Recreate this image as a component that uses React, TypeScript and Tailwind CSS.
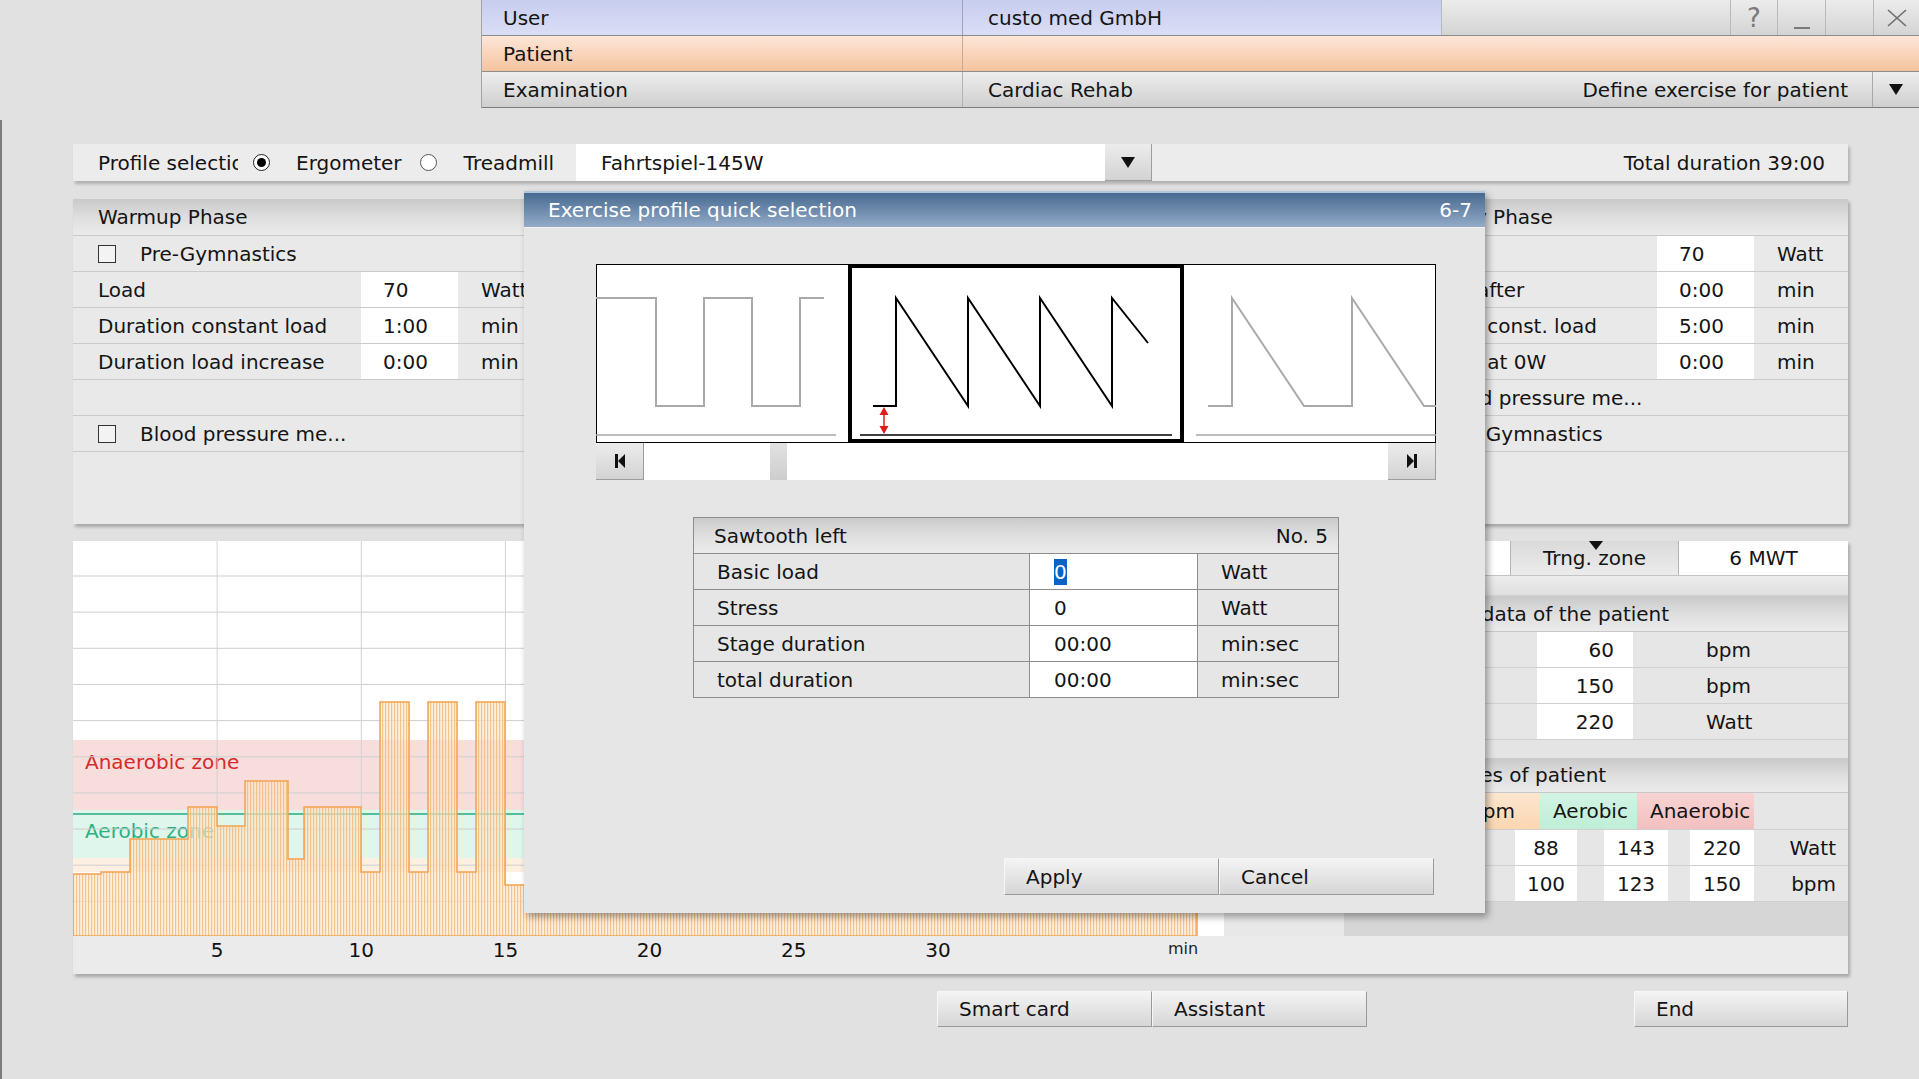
import React from 'react';

const btn =
  'flex items-center border border-t-[#f7f7f7] border-l-[#f7f7f7] border-r-[#9a9a9a] border-b-[#9a9a9a] bg-linear-to-b from-[#f4f4f4] to-[#d6d6d6] pl-[21px]';

const sectionHead =
  'flex items-center border-b border-[#c8c8c8] bg-linear-to-b from-[#c9c9c9] via-[#dedede] to-[#ebebeb]';

function DownArrow() {
  return (
    <svg width="14" height="11" viewBox="0 0 14 11">
      <polygon points="0,0 14,0 7,11" fill="#111" />
    </svg>
  );
}

function Checkbox() {
  return <span className="inline-block h-[18px] w-[18px] shrink-0 border border-[#333] bg-[#f3f3f3]" />;
}

function PhaseRow({ label, value, unit }: { label: string; value: string; unit: string }) {
  return (
    <div className="flex h-[36px] border-b border-[#cacaca]">
      <div className="flex w-[288px] items-center overflow-hidden whitespace-nowrap pl-[25px]">{label}</div>
      <div className="flex w-[97px] items-center bg-white pl-[22px]">{value}</div>
      <div className="flex flex-1 items-center pl-[23px]">{unit}</div>
    </div>
  );
}

function CheckRow({ label }: { label: string }) {
  return (
    <div className="flex h-[36px] items-center border-b border-[#cacaca] pl-[25px]">
      <Checkbox />
      <span className="ml-[24px] whitespace-nowrap">{label}</span>
    </div>
  );
}

function EmptyRow() {
  return <div className="h-[36px] border-b border-[#cacaca]" />;
}

function Panel({ children }: { children: React.ReactNode }) {
  return (
    <div className="flex h-[325px] flex-col bg-[#e9e9e9] shadow-[2px_3px_3px_rgba(0,0,0,0.25)]">{children}</div>
  );
}

// load profile of the exercise, x in px (28.83px per minute), y from chart top
const steps: [number, number][] = [
  [0, 333], [28, 331], [57, 298], [115, 266], [144, 285], [172, 240], [215, 318], [231, 266],
  [288, 331], [307, 161], [336, 331], [355, 161], [384, 331], [403, 161], [432, 344],
  [490, 300], [620, 250], [760, 300], [900, 330], [1040, 344],
];

function LoadChart() {
  const end = 1124;
  let d = `M0,395`;
  steps.forEach(([x, y], i) => {
    const next = i + 1 < steps.length ? steps[i + 1][0] : end;
    d += ` L${x},${y} L${next},${y}`;
  });
  d += ` L${end},395 Z`;
  const hLines = Array.from({ length: 10 }, (_, k) => 35 + k * 36.15);
  const vLines = Array.from({ length: 7 }, (_, k) => (k + 1) * 144.15);
  return (
    <svg width="1151" height="395" className="block shrink-0">
      <defs>
        <pattern id="hatch" width="3" height="10" patternUnits="userSpaceOnUse">
          <rect width="3" height="10" fill="#fbe7cf" fillOpacity="0.65" />
          <rect width="1.2" height="10" fill="#f3bd7c" fillOpacity="0.85" />
        </pattern>
      </defs>
      <rect width="1151" height="395" fill="#fff" />
      <rect x="0" y="199" width="1151" height="70" fill="#f8dddd" />
      <rect x="0" y="269" width="1151" height="48" fill="#def6ec" />
      <rect x="0" y="317" width="1151" height="14" fill="#fdefe2" />
      <line x1="0" y1="273" x2="1151" y2="273" stroke="#2aa882" strokeWidth="1.5" />
      <text x="12" y="228" fontSize="20" fill="#d62a2a">Anaerobic zone</text>
      <text x="12" y="297" fontSize="20" fill="#2bb07f">Aerobic zone</text>
      {hLines.map((y) => (
        <line key={y} x1="0" y1={y} x2="1151" y2={y} stroke="#cfcfcf" strokeWidth="1" />
      ))}
      {vLines.map((x) => (
        <line key={x} x1={x} y1="0" x2={x} y2="395" stroke="#d2d2d2" strokeWidth="1" />
      ))}
      <path d={d} fill="url(#hatch)" stroke="#f2a24e" strokeWidth="1.5" />
    </svg>
  );
}

function AxisRow() {
  const labels = [5, 10, 15, 20, 25, 30];
  return (
    <svg width="1151" height="38" className="block">
      {labels.map((n, i) => (
        <text key={n} x={(i + 1) * 144.15} y="21" fontSize="20" textAnchor="middle" fill="#111">
          {n}
        </text>
      ))}
      <text x="1110" y="18" fontSize="16" textAnchor="middle" fill="#222">
        min
      </text>
    </svg>
  );
}

function ProfileCarousel() {
  return (
    <svg width="840" height="179" className="block">
      <rect x="0.5" y="0.5" width="839" height="178" fill="#fff" stroke="#000" />
      <polyline
        points="0,34 60,34 60,142 108,142 108,34 156,34 156,142 204,142 204,34 228,34"
        fill="none"
        stroke="#a9a9a9"
        strokeWidth="2"
      />
      <line x1="0" y1="171" x2="240" y2="171" stroke="#a9a9a9" strokeWidth="1.5" />
      <polyline
        points="277,142 300,142 300,34 372,142 372,34 444,142 444,34 516,142 516,34 552,79"
        fill="none"
        stroke="#000"
        strokeWidth="2"
      />
      <line x1="264" y1="171" x2="576" y2="171" stroke="#000" strokeWidth="1.5" />
      <line x1="288" y1="148" x2="288" y2="165" stroke="#e01b1b" strokeWidth="1.5" />
      <polygon points="283.5,151 292.5,151 288,143" fill="#e01b1b" />
      <polygon points="283.5,162 292.5,162 288,170" fill="#e01b1b" />
      <rect x="254" y="2" width="332" height="175" fill="none" stroke="#000" strokeWidth="4" />
      <polyline
        points="612,142 636,142 636,34 708,142 756,142 756,34 828,142 840,142"
        fill="none"
        stroke="#a9a9a9"
        strokeWidth="2"
      />
      <line x1="600" y1="171" x2="840" y2="171" stroke="#a9a9a9" strokeWidth="1.5" />
    </svg>
  );
}

function ScrollBar() {
  const cap = 'flex w-[48px] items-center justify-center border-r border-b border-[#9d9d9d] bg-linear-to-b from-[#ececec] to-[#d3d3d3]';
  return (
    <div className="flex h-[37px] w-[840px] bg-white">
      <div className={cap}>
        <svg width="10" height="14" viewBox="0 0 10 14">
          <rect x="0" y="0" width="3" height="14" fill="#111" />
          <polygon points="10,0 10,14 3,7" fill="#111" />
        </svg>
      </div>
      <div className="relative flex-1">
        <div className="absolute left-[126px] top-0 h-full w-[17px] bg-linear-to-b from-[#e2e2e2] to-[#cdcdcd]" />
      </div>
      <div className={cap}>
        <svg width="10" height="14" viewBox="0 0 10 14">
          <polygon points="0,0 0,14 7,7" fill="#111" />
          <rect x="7" y="0" width="3" height="14" fill="#111" />
        </svg>
      </div>
    </div>
  );
}

function ParamRow({ label, value, unit, selected }: { label: string; value: string; unit: string; selected?: boolean }) {
  return (
    <div className="flex h-[36px] border-t border-[#8d8d8d]">
      <div className="flex w-[335px] items-center pl-[23px]">{label}</div>
      <div className="flex w-[168px] items-center border-l border-[#8d8d8d] bg-white pl-[24px]">
        {selected ? <span className="bg-[#0b62c6] leading-[26px] text-white">{value}</span> : value}
      </div>
      <div className="flex flex-1 items-center border-l border-[#8d8d8d] pl-[23px]">{unit}</div>
    </div>
  );
}

function Dialog() {
  return (
    <div className="absolute left-[524px] top-[191px] flex h-[722px] w-[961px] flex-col bg-[#e6e6e6] shadow-[3px_4px_7px_rgba(0,0,0,0.35)]">
      <div className="flex h-[37px] items-center justify-between border-t-2 border-b border-t-[#b3c5d9] border-b-[#f2f2f2] bg-linear-to-b from-[#486a90] to-[#93abc8] pl-[24px] pr-[13px] text-white">
        <span>Exercise profile quick selection</span>
        <span>6-7</span>
      </div>
      <div className="flex flex-col pl-[72px] pt-[36px]">
        <ProfileCarousel />
        <ScrollBar />
        <div className="ml-[97px] mt-[37px] w-[646px] border border-[#8d8d8d]">
          <div className="flex h-[35px] items-center justify-between bg-linear-to-b from-[#cbcbcb] via-[#dfdfdf] to-[#ebebeb] pl-[20px] pr-[10px]">
            <span>Sawtooth left</span>
            <span>No. 5</span>
          </div>
          <ParamRow label="Basic load" value="0" unit="Watt" selected />
          <ParamRow label="Stress" value="0" unit="Watt" />
          <ParamRow label="Stage duration" value="00:00" unit="min:sec" />
          <ParamRow label="total duration" value="00:00" unit="min:sec" />
        </div>
        <div className="ml-[408px] mt-[160px] flex h-[37px]">
          <div className={`${btn} w-[215px]`}>Apply</div>
          <div className={`${btn} w-[215px]`}>Cancel</div>
        </div>
      </div>
    </div>
  );
}

function TrainingZone() {
  const white = 'flex items-center justify-center bg-white';
  return (
    <div className="flex w-[504px] flex-col bg-[#e6e6e6]">
      <div className="flex h-[35px] border-b border-[#c4c4c4]">
        <div className="w-[166px] bg-white" />
        <div className="relative flex w-[169px] items-center justify-center border-x border-[#b4b4b4] bg-linear-to-b from-[#dadada] to-[#ececec]">
          <svg width="14" height="9" viewBox="0 0 14 9" className="absolute left-[78px] top-0">
            <polygon points="0,0 14,0 7,9" fill="#111" />
          </svg>
          Trng. zone
        </div>
        <div className="flex flex-1 items-center justify-center bg-white">6 MWT</div>
      </div>
      <div className="h-[20px] border-b border-[#d2d2d2] bg-linear-to-b from-[#ededed] to-[#dfdfdf]" />
      <div className={`${sectionHead} h-[36px] pl-[50px]`}>Physical data of the patient</div>
      {[
        ['Rest HR', '60', 'bpm'],
        ['Max. HR', '150', 'bpm'],
        ['Load', '220', 'Watt'],
      ].map(([l, v, u]) => (
        <div key={l} className="flex h-[36px] border-b border-[#d0d0d0]">
          <div className="flex w-[193px] items-center pl-[50px]">{l}</div>
          <div className="flex w-[96px] items-center justify-end bg-white pr-[19px]">{v}</div>
          <div className="flex flex-1 items-center pl-[73px]">{u}</div>
        </div>
      ))}
      <div className="h-[18px] bg-[#e4e4e4]" />
      <div className={`${sectionHead} h-[35px] pl-[38px]`}>Limit values of patient</div>
      <div className="flex h-[37px] border-b border-[#d0d0d0]">
        <div className="w-[106px]" />
        <div className="flex w-[90px] items-center justify-end bg-linear-to-b from-[#fde6cf] to-[#fbd6b3] pr-[25px]">bpm</div>
        <div className="flex w-[97px] items-center bg-linear-to-b from-[#d3f3e4] to-[#bfeed8] pl-[13px]">Aerobic</div>
        <div className="flex w-[117px] items-center bg-linear-to-b from-[#f8d3d3] to-[#f2c0c0] pl-[13px]">Anaerobic</div>
      </div>
      {[
        ['Load', '88', '143', '220', 'Watt'],
        ['HR', '100', '123', '150', 'bpm'],
      ].map(([l, a, b, c, u]) => (
        <div key={l} className="flex h-[36px] border-b border-[#d0d0d0]">
          <div className="flex w-[171px] items-center pl-[50px]">{l}</div>
          <div className={`${white} w-[62px]`}>{a}</div>
          <div className="w-[27px]" />
          <div className={`${white} w-[64px]`}>{b}</div>
          <div className="w-[22px]" />
          <div className={`${white} w-[64px]`}>{c}</div>
          <div className="flex flex-1 items-center justify-end pr-[12px]">{u}</div>
        </div>
      ))}
      <div className="flex-1 bg-[#d6d6d6]" />
    </div>
  );
}

export default function App() {
  return (
    <div className="relative h-[1079px] w-[1919px] overflow-hidden bg-[#e1e1e1] font-['DejaVu_Sans',sans-serif] text-[20px] leading-none text-[#141414]">
      {/* header */}
      <div className="flex h-[108px]">
        <div className="w-[481px]" />
        <div className="flex flex-1 flex-col border-l border-[#a3a3a3]">
          <div className="flex h-[36px] border-b border-[#8c8c8c]">
            <div className="flex w-[480px] items-center bg-linear-to-b from-[#c7cdef] to-[#dadef5] pl-[21px]">User</div>
            <div className="flex w-[479px] items-center border-l border-[#9ea3bf] bg-linear-to-b from-[#c7cdef] to-[#dadef5] pl-[25px]">
              custo med GmbH
            </div>
            <div className="w-[289px] border-l border-[#b9b9b9] bg-linear-to-b from-[#ececec] to-[#d4d4d4]" />
            <div className="flex w-[47px] items-center justify-center border-l border-[#b9b9b9] bg-linear-to-b from-[#ececec] to-[#d4d4d4] text-[26px] text-[#7a7a7a]">
              ?
            </div>
            <div className="flex w-[48px] items-end justify-center border-l border-[#b9b9b9] bg-linear-to-b from-[#ececec] to-[#d4d4d4] pb-[6px]">
              <span className="h-[2px] w-[16px] bg-[#7a7a7a]" />
            </div>
            <div className="w-[48px] border-l border-[#b9b9b9] bg-linear-to-b from-[#ececec] to-[#d4d4d4]" />
            <div className="flex flex-1 items-center justify-center border-l border-[#b9b9b9] bg-linear-to-b from-[#ececec] to-[#d4d4d4]">
              <svg width="20" height="18" viewBox="0 0 20 18">
                <path d="M1 1 L19 17 M19 1 L1 17" stroke="#6e6e6e" strokeWidth="1.6" fill="none" />
              </svg>
            </div>
          </div>
          <div className="flex h-[36px] border-b border-[#8c8c8c] bg-linear-to-b from-[#fde6d8] to-[#f5c39f]">
            <div className="flex w-[480px] items-center pl-[21px]">Patient</div>
            <div className="flex-1 border-l border-[#c9a890]" />
          </div>
          <div className="flex h-[36px] border-b border-[#7d7d7d] bg-linear-to-b from-[#eeeeee] to-[#cfcfcf]">
            <div className="flex w-[480px] items-center pl-[21px]">Examination</div>
            <div className="flex flex-1 items-center justify-between border-l border-[#b3b3b3] pl-[25px] pr-[24px]">
              <span>Cardiac Rehab</span>
              <span>Define exercise for patient</span>
            </div>
            <div className="flex w-[47px] items-center justify-center border-l border-[#a8a8a8]">
              <DownArrow />
            </div>
          </div>
        </div>
      </div>

      {/* main */}
      <div className="mt-[12px] h-[959px] border-l-2 border-[#7e7e7e] pl-[71px] pt-[24px]">
        <div className="w-[1775px]">
          {/* profile selection bar */}
          <div className="flex h-[37px] items-center bg-[#ececec] shadow-[2px_3px_3px_rgba(0,0,0,0.22)]">
            <span className="ml-[25px] w-[140px] overflow-hidden whitespace-nowrap">Profile selection</span>
            <span className="ml-[15px] flex h-[17px] w-[17px] items-center justify-center rounded-full border-[1.5px] border-[#222] bg-white">
              <span className="h-[9px] w-[9px] rounded-full bg-black" />
            </span>
            <span className="ml-[26px]">Ergometer</span>
            <span className="ml-[18px] h-[17px] w-[17px] rounded-full border border-[#555] bg-white" />
            <span className="ml-[27px]">Treadmill</span>
            <div className="ml-[22px] flex h-full w-[529px] items-center bg-white pl-[25px]">Fahrtspiel-145W</div>
            <div className="flex h-full w-[47px] items-center justify-center border-r border-b border-[#9d9d9d] bg-linear-to-b from-[#ececec] to-[#d3d3d3]">
              <DownArrow />
            </div>
            <span className="ml-auto pr-[23px]">Total duration 39:00</span>
          </div>

          {/* phase panels */}
          <div className="mt-[18px] flex">
            <div className="w-[479px]">
              <Panel>
                <div className={`${sectionHead} h-[37px] pl-[25px]`}>Warmup Phase</div>
                <CheckRow label="Pre-Gymnastics" />
                <PhaseRow label="Load" value="70" unit="Watt" />
                <PhaseRow label="Duration constant load" value="1:00" unit="min" />
                <PhaseRow label="Duration load increase" value="0:00" unit="min" />
                <EmptyRow />
                <CheckRow label="Blood pressure me..." />
              </Panel>
            </div>
            <div className="mx-[8px] flex-1">
              <Panel>
                <div className={`${sectionHead} h-[37px] pl-[25px]`}>Training Phase</div>
              </Panel>
            </div>
            <div className="w-[479px]">
              <Panel>
                <div className={`${sectionHead} h-[37px] pl-[25px]`}>Recovery Phase</div>
                <PhaseRow label="Load" value="70" unit="Watt" />
                <PhaseRow label="Interval after" value="0:00" unit="min" />
                <PhaseRow label="Duration const. load" value="5:00" unit="min" />
                <PhaseRow label="Duration at 0W" value="0:00" unit="min" />
                <CheckRow label="Blood pressure me..." />
                <CheckRow label="Post-Gymnastics" />
              </Panel>
            </div>
          </div>

          {/* chart panel */}
          <div className="mt-[17px] flex h-[433px] flex-col bg-[#ebebeb] shadow-[2px_3px_3px_rgba(0,0,0,0.25)]">
            <div className="flex h-[395px]">
              <LoadChart />
              <div className="w-[120px] bg-[#e8e8e8]" />
              <TrainingZone />
            </div>
            <div className="h-[38px]">
              <AxisRow />
            </div>
          </div>

          {/* bottom buttons */}
          <div className="mt-[17px] flex h-[36px]">
            <div className={`${btn} ml-[864px] w-[215px]`}>Smart card</div>
            <div className={`${btn} w-[215px]`}>Assistant</div>
            <div className={`${btn} ml-auto w-[214px]`}>End</div>
          </div>
        </div>
      </div>

      <Dialog />
    </div>
  );
}
